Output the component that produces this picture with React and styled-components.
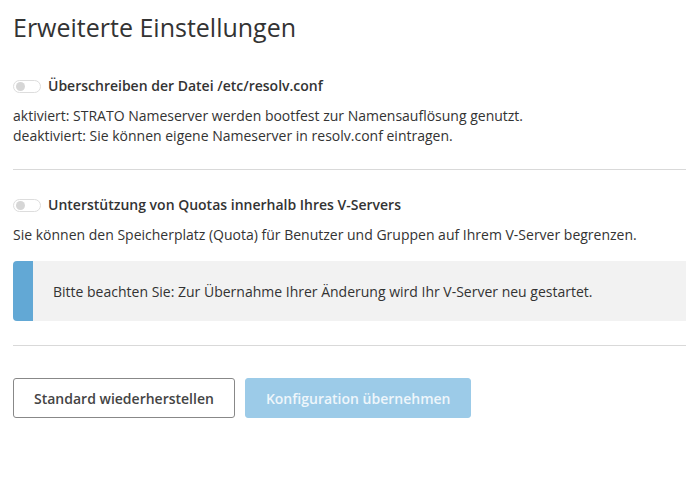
import React from 'react';
import styled, { createGlobalStyle } from 'styled-components';

const GlobalStyle = createGlobalStyle`
  html, body {
    margin: 0;
    padding: 0;
    background: #fff;
  }
  body {
    font-family: "Open Sans", "Liberation Sans", sans-serif;
    color: #333;
  }
`;

const Page = styled.div`
  padding: 11px 0 0 13px;
  display: flex;
  flex-direction: column;
`;

const Title = styled.h1`
  margin: 0 0 33px 0;
  font-size: 25px;
  font-weight: 400;
  line-height: 32px;
  color: #333;
`;

const Section = styled.div`
  display: flex;
  flex-direction: column;
`;

const ToggleRow = styled.label`
  display: flex;
  align-items: center;
  gap: 7px;
  font-size: 14px;
  font-weight: 600;
  line-height: 20px;
  color: #333;
`;

const Switch = styled.span`
  position: relative;
  width: 26px;
  height: 11px;
  border: 1px solid #ddd;
  border-radius: 7px;
  background: #fff;
  flex-shrink: 0;

  &::after {
    content: '';
    position: absolute;
    left: 2px;
    top: 1px;
    width: 9px;
    height: 9px;
    border-radius: 50%;
    background: #d6d6d6;
  }
`;

const Desc = styled.p`
  margin: ${p => p.$top}px 0 0 0;
  font-size: 14px;
  line-height: 20px;
  color: #333;
`;

const Divider = styled.hr`
  margin: ${p => p.$top}px 0 ${p => p.$bottom}px 0;
  border: 0;
  border-top: 1px solid #d9d9d9;
`;

const Notice = styled.div`
  margin-top: 16px;
  display: flex;
  height: 60px;
  background: #f2f2f2;
  border-radius: 4px 0 0 4px;
  overflow: hidden;
`;

const NoticeBar = styled.div`
  width: 20px;
  background: #62a8d5;
  flex-shrink: 0;
`;

const NoticeText = styled.div`
  display: flex;
  align-items: center;
  padding-left: 20px;
  font-size: 14px;
  color: #333;
`;

const Buttons = styled.div`
  display: flex;
  gap: 10px;
`;

const Button = styled.button`
  height: 40px;
  padding: 0 20px;
  border-radius: 3px;
  font-family: "Open Sans", "Liberation Sans", sans-serif;
  font-size: 14px;
  font-weight: 600;
  border: 1px solid ${p => (p.$primary ? '#9ccbe8' : '#888')};
  background: ${p => (p.$primary ? '#9ccbe8' : '#fff')};
  color: ${p => (p.$primary ? '#eef6fb' : '#444')};
`;

export default function App() {
  return (
    <>
      <GlobalStyle />
      <Page>
        <Title>Erweiterte Einstellungen</Title>
        <Section>
          <ToggleRow>
            <Switch />
            Überschreiben der Datei /etc/resolv.conf
          </ToggleRow>
          <Desc $top={10}>
            aktiviert: STRATO Nameserver werden bootfest zur Namensauflösung genutzt.
            <br />
            deaktiviert: Sie können eigene Nameserver in resolv.conf eintragen.
          </Desc>
        </Section>
        <Divider $top={23} $bottom={25} />
        <Section>
          <ToggleRow>
            <Switch />
            Unterstützung von Quotas innerhalb Ihres V-Servers
          </ToggleRow>
          <Desc $top={10}>
            Sie können den Speicherplatz (Quota) für Benutzer und Gruppen auf Ihrem V-Server begrenzen.
          </Desc>
          <Notice>
            <NoticeBar />
            <NoticeText>
              Bitte beachten Sie: Zur Übernahme Ihrer Änderung wird Ihr V-Server neu gestartet.
            </NoticeText>
          </Notice>
        </Section>
        <Divider $top={24} $bottom={32} />
        <Buttons>
          <Button>Standard wiederherstellen</Button>
          <Button $primary>Konfiguration übernehmen</Button>
        </Buttons>
      </Page>
    </>
  );
}
